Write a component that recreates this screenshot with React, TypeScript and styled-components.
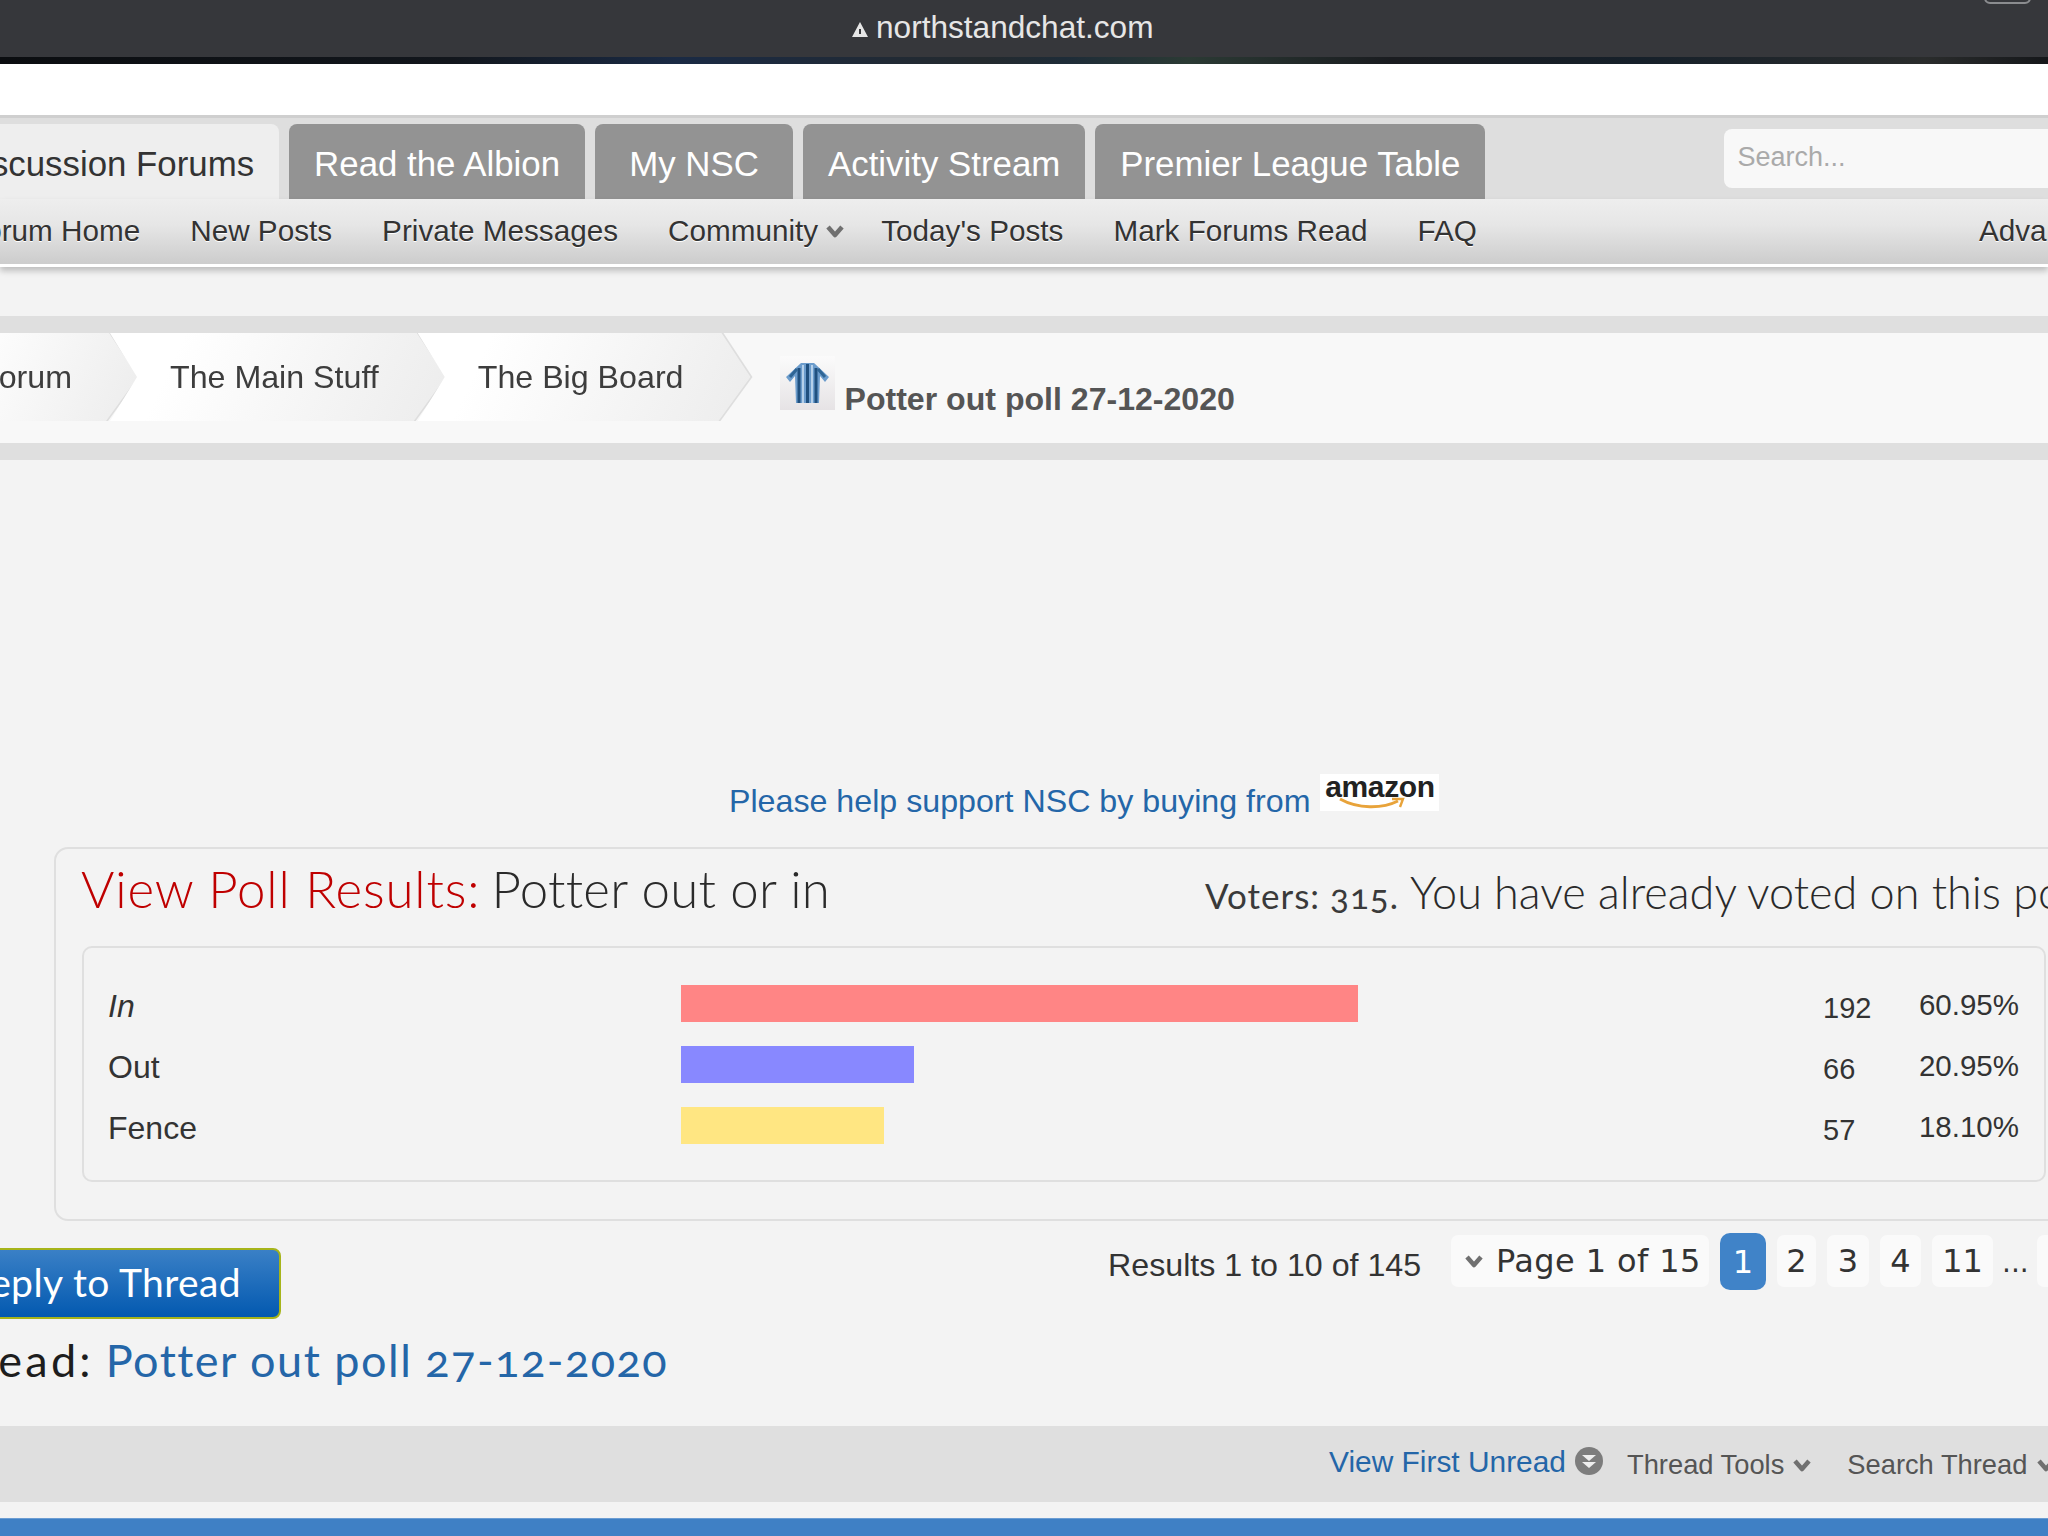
import React from "react";
import styled, { createGlobalStyle } from "styled-components";

const Global = createGlobalStyle`
  html, body { margin: 0; padding: 0; background: #f3f3f3; }
  #root { width: 2048px; height: 1536px; overflow: hidden; }
  * { box-sizing: border-box; }
`;

const sans = `"Liberation Sans", Arial, sans-serif`;
const display = `Lato, "Open Sans", sans-serif`;

const Page = styled.div`
  width: 2048px;
  height: 1536px;
  overflow: hidden;
  background: #f3f3f3;
  font-family: ${sans};
  display: flex;
  flex-direction: column;
`;

const AddressBar = styled.div`
  position: relative;
  height: 57px;
  background: #36373b;
  display: flex;
  align-items: center;
  gap: 8px;
  padding: 0 0 2px 852px;
  color: #e6e6e6;
  font-size: 31.6px;
  flex-shrink: 0;
`;
const Battery = styled.span`
  position: absolute;
  top: -22px;
  right: 17px;
  width: 47px;
  height: 26px;
  border: 2px solid #8b8c8f;
  border-radius: 6px;
`;
const ImageStrip = styled.div`
  height: 7px;
  flex-shrink: 0;
  background: linear-gradient(90deg, #0b0d10 0%, #12161c 22%, #1a2a44 33%, #242a2e 48%, #1e2c38 52%, #2b3a34 58%, #1a1c20 68%, #16202a 80%, #2a2c2c 94%, #15171a 100%);
`;
const WhiteBand = styled.div`
  height: 51px;
  background: #fff;
  flex-shrink: 0;
`;

const TabBar = styled.div`
  height: 84px;
  flex-shrink: 0;
  background: #dedede;
  border-top: 3px solid #cfcfcf;
  padding-top: 6px;
  display: flex;
  align-items: flex-start;
  gap: 10px;
  font-size: 34.85px;
`;
const Tab = styled.div<{ $active?: boolean; $min?: number }>`
  height: 75px;
  flex-shrink: 0;
  padding: 5px 25px 0;
  min-width: ${(p) => p.$min ?? 0}px;
  border-radius: 8px 8px 0 0;
  display: flex;
  align-items: center;
  justify-content: center;
  background: ${(p) => (p.$active ? "#eeeeee" : "#939393")};
  color: ${(p) => (p.$active ? "#333" : "#fff")};
`;
const FirstTab = styled(Tab)`
  margin-left: -67px;
`;
const SearchBox = styled.div`
  width: 400px;
  height: 59px;
  margin: 5px 0 0 229px;
  flex-shrink: 0;
  padding: 1px 0 3px 13px;
  background: #f8f8f8;
  border-radius: 8px;
  color: #aaa;
  font-size: 27px;
  display: flex;
  align-items: center;
`;

const SubNav = styled.div`
  height: 68px;
  flex-shrink: 0;
  background: linear-gradient(#eeeeee, #e6e6e6 40%, #cdcdcd 98%);
  border-bottom: 3px solid #fff;
  display: flex;
  align-items: center;
  gap: 50px;
  padding-bottom: 1px;
  font-size: 29.7px;
  color: #333;
  box-shadow: 0 4px 6px rgba(0, 0, 0, 0.22);
  position: relative;
`;
const SubItem = styled.span`
  flex-shrink: 0;
  display: inline-flex;
  align-items: center;
  text-shadow: 0 1px 0 #fff;
`;
const FirstSub = styled(SubItem)`
  margin-left: -33px;
`;
const LastSub = styled(SubItem)`
  margin-left: 452px;
`;
const Caret = styled.svg<{ $left?: number; $w?: number }>`
  width: ${(p) => p.$w ?? 20}px;
  height: 16px;
  margin-left: ${(p) => p.$left ?? 7}px;
  flex-shrink: 0;
`;
const CommunityItem = styled(SubItem)`
  margin-right: -14px;
`;

const Breadcrumbs = styled.div`
  margin-top: 49px;
  height: 144px;
  flex-shrink: 0;
  border-top: 17px solid #dfdfdf;
  border-bottom: 17px solid #dfdfdf;
  background: #f8f8f8;
  display: flex;
  align-items: flex-start;
`;
const CrumbWrap = styled.div<{ $first?: boolean }>`
  flex-shrink: 0;
  margin-left: ${(p) => (p.$first ? -81 : -28)}px;
  filter: drop-shadow(2px 0 0 #dedede);
`;
const Crumb = styled.div<{ $right?: number }>`
  height: 88px;
  padding: 1px ${(p) => p.$right ?? 67}px 0 60px;
  display: flex;
  align-items: center;
  font-size: 32.2px;
  color: #3d3d3d;
  background: linear-gradient(115deg, #ffffff 20%, #ececec 100%);
  clip-path: polygon(0 0, calc(100% - 29px) 0, 100% 50%, calc(100% - 32px) 100%, 0 100%, 27px 50%);
`;
const ThreadIcon = styled.svg`
  width: 55px;
  height: 54px;
  margin: 23px 0 0 29px;
  flex-shrink: 0;
`;
const ThreadHeading = styled.h1`
  margin: 0 0 0 10px;
  padding-top: 48px;
  font-size: 32.1px;
  line-height: 37px;
  font-weight: 700;
  color: #555;
`;

const SupportRow = styled.div`
  margin-top: 314px;
  height: 37px;
  padding-left: 729px;
  display: flex;
  align-items: flex-start;
  flex-shrink: 0;
`;
const SupportLink = styled.a`
  font-size: 32.2px;
  line-height: 37px;
  padding-top: 9px;
  color: #2466a8;
`;
const AmazonLogo = styled.span`
  position: relative;
  width: 119px;
  height: 37px;
  margin-left: 10px;
  background: #fff;
  display: block;
`;
const AmazonWord = styled.span`
  display: block;
  text-align: center;
  font: 700 30px/25px ${sans};
  letter-spacing: -0.4px;
  color: #222;
`;
const AmazonSmile = styled.svg`
  position: absolute;
  left: 18px;
  top: 23px;
  width: 68px;
  height: 13px;
`;

const PollBox = styled.section`
  margin: 36px 0 0 54px;
  width: 2100px;
  height: 374px;
  flex-shrink: 0;
  border: 2px solid #dfdfdf;
  border-radius: 14px;
  padding: 0 0 0 26px;
`;
const PollHead = styled.div`
  height: 97px;
  display: flex;
  align-items: flex-start;
`;
const PollTitle = styled.h2`
  margin: 0 0 0 -1px;
  padding-top: 10px;
  font: 300 51px/60px ${display};
  letter-spacing: 0.25px;
  color: #2a2a2a;
  white-space: nowrap;
  flex-shrink: 0;
  width: 1124px;
`;
const PollTitleLead = styled.span`
  color: #bf0000;
  letter-spacing: 0.85px;
  margin-right: -3px;
`;
const Voters = styled.div`
  padding-top: 21px;
  white-space: nowrap;
  display: flex;
  align-items: baseline;
  flex-shrink: 0;
  color: #3a3a3a;
  font: 400 35px/44px ${display};
  letter-spacing: 1px;
`;
const OldNum = styled.span`
  font-variant-numeric: oldstyle-nums;
`;
const VotedNote = styled.span`
  margin-left: 11px;
  font: 300 45px/44px ${display};
  letter-spacing: 0;
  color: #2a2a2a;
`;
const PollTable = styled.div`
  width: 1964px;
  height: 236px;
  border: 2px solid #dfdfdf;
  border-radius: 10px;
  padding: 37px 0 0 24px;
`;
const PollRow = styled.div`
  display: grid;
  grid-template-columns: 573px 1142px 101px 95px;
  height: 61px;
  align-items: start;
  color: #333;
`;
const OptionLabel = styled.div<{ $italic?: boolean }>`
  font-size: 32px;
  line-height: 43px;
  font-style: ${(p) => (p.$italic ? "italic" : "normal")};
`;
const Bar = styled.div`
  height: 37px;
`;
const Votes = styled.div`
  font-size: 29px;
  line-height: 47px;
`;
const Percent = styled.div`
  font-size: 29.5px;
  line-height: 40px;
  text-align: right;
  white-space: nowrap;
  justify-self: end;
`;

const ActionRow = styled.div`
  margin-top: 12px;
  height: 97px;
  flex-shrink: 0;
  display: flex;
  align-items: flex-start;
`;
const ReplyButton = styled.button`
  margin: 15px 0 0 -16px;
  height: 71px;
  width: 297px;
  flex-shrink: 0;
  padding: 0 38px 3px 0;
  border: 2px solid #a6b41a;
  border-radius: 8px;
  background: linear-gradient(#3a80c6, #0359b0);
  color: #fff;
  font: 400 39px/1 ${display};
  letter-spacing: 0.4px;
  white-space: nowrap;
  display: flex;
  align-items: center;
  justify-content: flex-end;
`;
const ResultsText = styled.div`
  margin-left: 827px;
  padding-top: 14px;
  font-size: 32.2px;
  line-height: 36px;
  color: #333;
  flex-shrink: 0;
  white-space: nowrap;
  width: 343px;
`;
const Pager = styled.div`
  display: flex;
  align-items: flex-start;
  flex-shrink: 0;
  gap: 11px;
  font: 400 32px/1 "DejaVu Sans", sans-serif;
  color: #333;
`;
const PageLabel = styled.div`
  height: 52px;
  margin-top: 2px;
  width: 258px;
  padding-left: 13px;
  background: #fafafa;
  border-radius: 7px;
  display: flex;
  align-items: center;
  gap: 12px;
  white-space: nowrap;
  flex-shrink: 0;
  letter-spacing: 0.4px;
`;
const PageNum = styled.div<{ $w: number; $current?: boolean }>`
  width: ${(p) => p.$w}px;
  height: ${(p) => (p.$current ? 57 : 52)}px;
  margin-top: ${(p) => (p.$current ? 0 : 2)}px;
  border-radius: ${(p) => (p.$current ? 10 : 7)}px;
  background: ${(p) => (p.$current ? "#4083c8" : "#fafafa")};
  color: ${(p) => (p.$current ? "#fff" : "#333")};
  display: flex;
  align-items: center;
  justify-content: center;
  flex-shrink: 0;
`;
const Ellipsis = styled.div`
  height: 52px;
  margin: 4px -3px 0 -2px;
  font-size: 28px;
  display: flex;
  align-items: center;
  flex-shrink: 0;
`;

const ThreadLine = styled.div`
  height: 60px;
  margin-left: -78px;
  flex-shrink: 0;
  white-space: nowrap;
  font: 400 45px/60px ${display};
  color: #1d1d1d;
`;
const ThreadLabel = styled.span`
  letter-spacing: 3.2px;
`;
const ThreadLink = styled.a`
  margin-left: 12px;
  color: #2466a8;
  letter-spacing: 1.5px;
`;

const ToolBar = styled.div`
  margin-top: 36px;
  height: 76px;
  flex-shrink: 0;
  background: #dfdfdf;
  display: flex;
  align-items: flex-start;
  padding: 18px 0 0 1329px;
  white-space: nowrap;
`;
const FirstUnread = styled.a`
  font-size: 29.9px;
  line-height: 36px;
  color: #2466a8;
  flex-shrink: 0;
`;
const UnreadIcon = styled.svg`
  width: 30px;
  height: 30px;
  margin: 2px 0 0 8px;
  flex-shrink: 0;
`;
const ToolItem = styled.div`
  display: flex;
  align-items: center;
  flex-shrink: 0;
  padding-top: 3px;
  color: #555;
  font-size: 27.3px;
  line-height: 36px;
  margin-left: 23px;
`;
const ToolItemFar = styled(ToolItem)`
  margin-left: 35px;
`;
const Footer = styled.div`
  margin-top: 16px;
  flex: 1;
  background: #3f80c5;
  border-top: 1px solid #6c9dd3;
`;

const Chevron = ({ w, left }: { w?: number; left?: number }) => (
  <Caret $w={w} $left={left} viewBox="0 0 20 16">
    <path d="M3 4 L10 12 L17 4" fill="none" stroke="#707070" strokeWidth="4.5" strokeLinejoin="round" />
  </Caret>
);

const bars = [
  { label: "In", italic: true, color: "#ff8585", width: 677, votes: "192", pct: "60.95%" },
  { label: "Out", color: "#8888ff", width: 233, votes: "66", pct: "20.95%" },
  { label: "Fence", color: "#ffe682", width: 203, votes: "57", pct: "18.10%" },
];

export default function App() {
  return (
    <Page>
      <Global />
      <AddressBar>
        <svg width="16" height="15" viewBox="0 0 16 15" style={{ marginTop: 4 }}>
          <path d="M8 0 L16 15 L0 15 Z" fill="#e6e6e6" />
          <rect x="7" y="7" width="2" height="5" fill="#36373b" />
        </svg>
        <span>northstandchat.com</span>
        <Battery />
      </AddressBar>
      <ImageStrip />
      <WhiteBand />
      <TabBar>
        <FirstTab $active>Discussion Forums</FirstTab>
        <Tab>Read the Albion</Tab>
        <Tab $min={198}>My NSC</Tab>
        <Tab>Activity Stream</Tab>
        <Tab>Premier League Table</Tab>
        <SearchBox>Search...</SearchBox>
      </TabBar>
      <SubNav>
        <FirstSub>Forum Home</FirstSub>
        <SubItem>New Posts</SubItem>
        <SubItem>Private Messages</SubItem>
        <CommunityItem>
          Community
          <Chevron />
        </CommunityItem>
        <SubItem>Today's Posts</SubItem>
        <SubItem>Mark Forums Read</SubItem>
        <SubItem>FAQ</SubItem>
        <LastSub>Advanced Search</LastSub>
      </SubNav>
      <Breadcrumbs>
        <CrumbWrap $first>
          <Crumb $right={66}>Forum</Crumb>
        </CrumbWrap>
        <CrumbWrap>
          <Crumb>The Main Stuff</Crumb>
        </CrumbWrap>
        <CrumbWrap>
          <Crumb>The Big Board</Crumb>
        </CrumbWrap>
        <ThreadIcon viewBox="0 0 55 54">
          <defs>
            <linearGradient id="icbg" x1="0" y1="0" x2="0" y2="1">
              <stop offset="0" stopColor="#fbfbfb" />
              <stop offset="1" stopColor="#e6e3e5" />
            </linearGradient>
          </defs>
          <rect width="55" height="54" fill="url(#icbg)" />
          <path d="M21 7 L34 7 L49 21 L45 26 L40 20 L39 47 L16 47 L15 20 L10 26 L6 21 Z" fill="#6c9ccc" />
          <path d="M19 12 V47 M27.5 8 V47 M36 12 V47" stroke="#20507f" strokeWidth="3" fill="none" />
          <path d="M10 21 L17 13 M45 21 L38 13" stroke="#2f6595" strokeWidth="3" fill="none" />
          <path d="M23 9 V47 M32 9 V47" stroke="#b5d0ea" strokeWidth="2" fill="none" />
        </ThreadIcon>
        <ThreadHeading>Potter out poll 27-12-2020</ThreadHeading>
      </Breadcrumbs>
      <SupportRow>
        <SupportLink>Please help support NSC by buying from</SupportLink>
        <AmazonLogo>
          <AmazonWord>amazon</AmazonWord>
          <AmazonSmile viewBox="0 0 68 13">
            <path d="M2 2 C20 12 44 12 60 4" fill="none" stroke="#e8a33a" strokeWidth="3" />
            <path d="M54 2 L65 2 L62 10" fill="none" stroke="#e8a33a" strokeWidth="2.4" />
          </AmazonSmile>
        </AmazonLogo>
      </SupportRow>
      <PollBox>
        <PollHead>
          <PollTitle>
            <PollTitleLead>View Poll Results:</PollTitleLead> Potter out or in
          </PollTitle>
          <Voters>
            <span>
              Voters: <OldNum>315</OldNum>.
            </span>
            <VotedNote>You have already voted on this poll</VotedNote>
          </Voters>
        </PollHead>
        <PollTable>
          {bars.map((b) => (
            <PollRow key={b.label}>
              <OptionLabel $italic={b.italic}>{b.label}</OptionLabel>
              <Bar style={{ width: b.width, background: b.color }} />
              <Votes>{b.votes}</Votes>
              <Percent>{b.pct}</Percent>
            </PollRow>
          ))}
        </PollTable>
      </PollBox>
      <ActionRow>
        <ReplyButton>Reply to Thread</ReplyButton>
        <ResultsText>Results 1 to 10 of 145</ResultsText>
        <Pager>
          <PageLabel>
            <Chevron w={20} left={0} />
            Page 1 of 15
          </PageLabel>
          <PageNum $w={46} $current>1</PageNum>
          <PageNum $w={39}>2</PageNum>
          <PageNum $w={42}>3</PageNum>
          <PageNum $w={41}>4</PageNum>
          <PageNum $w={61}>11</PageNum>
          <Ellipsis>...</Ellipsis>
          <PageNum $w={80}>15</PageNum>
        </Pager>
      </ActionRow>
      <ThreadLine>
        <ThreadLabel>Thread:</ThreadLabel>
        <ThreadLink>Potter out poll <OldNum>27-12-2020</OldNum></ThreadLink>
      </ThreadLine>
      <ToolBar>
        <FirstUnread>View First Unread</FirstUnread>
        <UnreadIcon viewBox="0 0 30 30">
          <circle cx="15" cy="15" r="14" fill="#7d7d7d" />
          <path d="M8 9 H22 L15 15 Z M8 16 H22 L15 22 Z" fill="#eee" />
        </UnreadIcon>
        <ToolItem>
          Thread Tools
          <Chevron left={8} />
        </ToolItem>
        <ToolItemFar>
          Search Thread
          <Chevron left={9} />
        </ToolItemFar>
      </ToolBar>
      <Footer />
    </Page>
  );
}
